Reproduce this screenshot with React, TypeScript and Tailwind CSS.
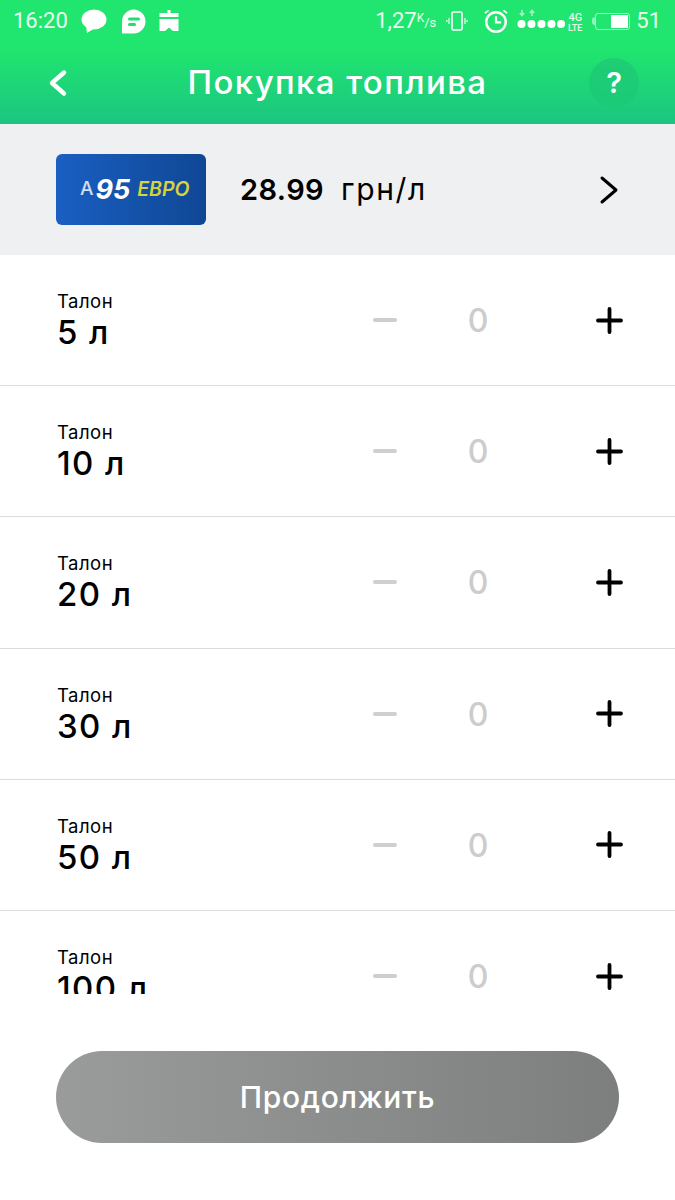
import React from 'react';

const rows = ['5 л', '10 л', '20 л', '30 л', '50 л', '100 л'];

const StatusLeft = () => (
  <div className="flex items-center">
    <span className="text-[22px] leading-none text-white/90 font-['Roboto',sans-serif] ml-[13px]">16:20</span>
    {/* message bubble */}
    <svg className="ml-[13px]" width="26" height="26" viewBox="0 0 26 26" fill="white">
      <ellipse cx="13" cy="11.5" rx="12.5" ry="10" />
      <path d="M5 18 L6 25 L14 20 Z" />
    </svg>
    {/* chat app */}
    <svg className="ml-[14px]" width="25" height="25" viewBox="0 0 25 25">
      <path d="M12.5 0.5 A12 12 0 0 1 12.5 24.5 H1 V12.5 A12 12 0 0 1 12.5 0.5 Z" fill="white" />
      <rect x="7" y="8.5" width="12" height="3" rx="1.5" fill="#20e070" />
      <rect x="7" y="14" width="8" height="3" rx="1.5" fill="#20e070" />
    </svg>
    {/* calendar thing */}
    <svg className="ml-[13px]" width="20" height="22" viewBox="0 0 20 22" fill="white">
      <rect x="8.5" y="0" width="3" height="4" />
      <rect x="0.5" y="3" width="19" height="4" />
      <path d="M0.5 9 H19.5 V21 H14 L10 17.5 L6 21 H0.5 Z" />
    </svg>
  </div>
);

const StatusRight = () => (
  <div className="flex items-center text-white/90 font-['Roboto',sans-serif]">
    <span className="text-[22px] leading-none">1,27</span>
    <span className="text-[12px] leading-none -mt-[6px]">K</span>
    <span className="text-[13px] leading-none mt-[2px]">/s</span>
    {/* vibrate */}
    <svg className="ml-[10px]" width="22" height="22" viewBox="0 0 22 22" fill="none" stroke="white" strokeWidth="1.6">
      <rect x="6" y="2" width="10" height="18" rx="1.5" />
      <path d="M3 8v6M0.8 10v2M19 8v6M21.2 10v2" strokeWidth="1.4" opacity="0.8" />
    </svg>
    {/* alarm */}
    <svg className="ml-[15px]" width="26" height="26" viewBox="0 0 28 28" fill="none" stroke="white" strokeWidth="2.6">
      <circle cx="14" cy="15" r="10.5" />
      <path d="M14 9v6.5h5.5" strokeWidth="2.4" />
      <path d="M2 5.5 L6 2.5 M26 5.5 L22 2.5" strokeWidth="1.8" />
    </svg>
    {/* signal dots */}
    <svg className="ml-[8px]" width="48" height="24" viewBox="0 0 48 24" fill="white">
      <path d="M5 1v5M2.8 4 5 6.5 7.2 4M15 7V2M12.8 4 15 1.5 17.2 4" stroke="#a8f0c4" strokeWidth="1.6" fill="none" />
      <circle cx="4.5" cy="15" r="4" />
      <circle cx="14.5" cy="15" r="4" />
      <circle cx="24.5" cy="15" r="4" />
      <circle cx="34.5" cy="15" r="4" />
      <circle cx="44" cy="15" r="4" />
    </svg>
    <div className="ml-[2px] flex flex-col items-center text-[11px] leading-[11px] font-medium w-[16px] mt-[3px]">
      <span>4G</span>
      <span className="text-[9px] leading-[10px]">LTE</span>
    </div>
    {/* battery */}
    <div className="ml-[9px] flex items-center">
      <div className="w-[3px] h-[8px] bg-white/50 rounded-l-sm" />
      <div className="w-[35px] h-[17px] border border-white/60 rounded-[3px] flex justify-end p-[1px]">
        <div className="w-[17px] bg-white" />
      </div>
    </div>
    <span className="text-[22px] leading-none ml-[6px] mr-[14px]">51</span>
  </div>
);

export default function App() {
  return (
    <div className="w-[675px] h-[1200px] bg-white overflow-hidden flex flex-col font-['Inter','Noto_Sans',sans-serif] text-black">
      {/* Header */}
      <div className="h-[124px] bg-gradient-to-b from-[#20e56e] from-40% to-[#1cc580] flex flex-col shrink-0">
        <div className="h-[42px] flex items-center justify-between">
          <StatusLeft />
          <StatusRight />
        </div>
        <div className="flex-1 flex items-center pl-[47px] pr-[36px] pb-[1px]">
          <div className="flex-1">
            <svg width="22" height="28" viewBox="0 0 22 28" fill="none" stroke="white" strokeWidth="4.4" strokeLinecap="round" strokeLinejoin="round">
              <path d="M17 3.5 L5 14 L17 24.5" />
            </svg>
          </div>
          <span className="mr-[11px] text-[33px] leading-none font-medium tracking-[1.4px] text-white">Покупка топлива</span>
          <div className="flex-1 flex justify-end">
            <div className="w-[50px] h-[50px] rounded-full bg-[#1dc975]/80 flex items-center justify-center text-white text-[29px] font-semibold">?</div>
          </div>
        </div>
      </div>

      {/* Fuel */}
      <div className="h-[131px] shrink-0 bg-[#eff0f2] flex items-center pl-[56px] pr-[55px]">
        <div className="w-[150px] h-[71px] rounded-[6px] bg-gradient-to-r from-[#1a5fc2] to-[#0f4794] flex items-center pl-[24px]">
          <span className="text-[19px] font-medium text-white/80 mr-[2px]">A</span>
          <span className="text-[27px] leading-none font-bold italic text-white">95</span>
          <span className="text-[19.5px] font-semibold italic text-[#d6d33c] ml-[7px]">ЕВРО</span>
        </div>
        <span className="ml-[34px] text-[29px] font-semibold tracking-[0.4px]">28.99</span>
        <span className="ml-[17px] text-[30px] tracking-[1.6px]">грн/л</span>
        <svg className="ml-auto" width="22" height="30" viewBox="0 0 22 30" fill="none" stroke="black" strokeWidth="3" strokeLinecap="round" strokeLinejoin="round">
          <path d="M4 3 L18 15 L4 27" />
        </svg>
      </div>

      {/* Talons */}
      <div className="h-[739px] shrink-0 overflow-hidden">
        {rows.map((r) => (
          <div key={r} className="h-[131.2px] border-b border-[#dcdcdc] flex items-center pl-[57px] pr-[52px]">
            <div className="flex-1 pt-[1px]">
              <div className="text-[18.5px] leading-[23px] tracking-[0.5px]">Талон</div>
              <div className="text-[33px] leading-[38px] font-medium tracking-[1.4px]">{r}</div>
            </div>
            <div className="w-[24px] h-[4px] rounded-full bg-[#cfcfcf]" />
            <div className="ml-[69px] w-[24px] text-center text-[32px] leading-none font-medium text-[#cccccc] pt-[2px]">0</div>
            <svg className="ml-[106px]" width="27" height="27" viewBox="0 0 27 27" stroke="black" strokeWidth="3.8" strokeLinecap="round">
              <path d="M13.5 2v23M2 13.5h23" />
            </svg>
          </div>
        ))}
      </div>

      {/* Footer */}
      <div className="flex-1 px-[56px] pt-[57px]">
        <button className="w-full h-[92px] rounded-full bg-gradient-to-r from-[#9a9c9b] to-[#7d7f7e] text-white text-[30px] font-medium tracking-[0.7px]">
          Продолжить
        </button>
      </div>
    </div>
  );
}
